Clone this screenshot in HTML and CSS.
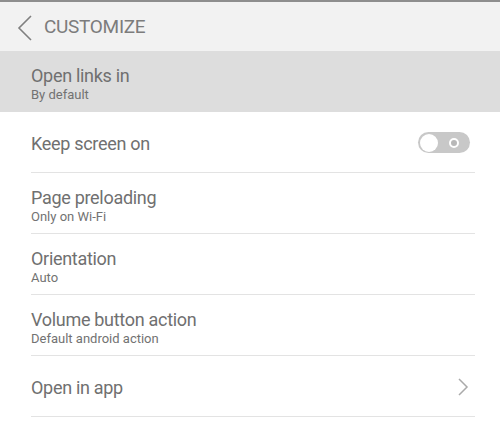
FILE: index.html
```html
<!DOCTYPE html>
<html>
<head>
<meta charset="utf-8">
<link rel="stylesheet" href="styles.css">
</head>
<body>
<div class="topline"></div>
<header class="header">
  <svg class="back" width="16" height="26" viewBox="0 0 16 26"><polyline points="14,1 2,13 14,25" fill="none" stroke="#808080" stroke-width="1.6"/></svg>
  <span class="header-title">CUSTOMIZE</span>
</header>
<div class="row active">
  <div class="row-inner two">
    <div class="title">Open links in</div>
    <div class="sub">By default</div>
  </div>
</div>
<div class="row">
  <div class="row-inner one with-ctrl">
    <div class="title">Keep screen on</div>
    <div class="toggle"><span class="knob"></span><span class="ring"></span></div>
  </div>
</div>
<div class="row">
  <div class="row-inner two">
    <div class="title">Page preloading</div>
    <div class="sub">Only on Wi-Fi</div>
  </div>
</div>
<div class="row">
  <div class="row-inner two">
    <div class="title">Orientation</div>
    <div class="sub">Auto</div>
  </div>
</div>
<div class="row">
  <div class="row-inner two">
    <div class="title">Volume button action</div>
    <div class="sub">Default android action</div>
  </div>
</div>
<div class="row">
  <div class="row-inner one with-ctrl">
    <div class="title">Open in app</div>
    <svg class="chev" width="12" height="18" viewBox="0 0 12 18"><polyline points="2,1 10,9 2,17" fill="none" stroke="#aaa" stroke-width="1.5"/></svg>
  </div>
</div>
</body>
</html>
```
FILE: styles.css
```css
html, body {
  margin: 0;
  padding: 0;
  background: #ffffff;
  font-family: Roboto, "Noto Sans", sans-serif;
  width: 500px;
  height: 429px;
  overflow: hidden;
}
.topline {
  height: 2px;
  background: #8e8e8e;
}
.header {
  height: 49px;
  background: #f2f2f2;
  display: flex;
  align-items: center;
  padding-left: 17px;
  box-sizing: border-box;
}
.back {
  display: block;
  margin-top: 2px;
}
.header-title {
  margin-left: 11px;
  font-size: 19px;
  color: #7c7c7c;
  letter-spacing: -0.3px;
  line-height: 22px;
  margin-top: 1px;
}
.row {
  height: 61px;
  box-sizing: border-box;
}
.row.active {
  background: #dddddd;
}
.row-inner {
  margin: 0 25px 0 31px;
  height: 61px;
  box-sizing: border-box;
  border-bottom: 1px solid #e3e3e3;
}
.row.active .row-inner {
  border-bottom: none;
}
.row-inner.two {
  padding-top: 14px;
}
.row-inner.one {
  padding-top: 21px;
}
.row-inner.with-ctrl {
  display: flex;
  justify-content: space-between;
  align-items: flex-start;
}
.title {
  font-size: 18px;
  line-height: 22px;
  color: #707070;
  letter-spacing: -0.3px;
}
.sub {
  font-size: 13px;
  line-height: 16px;
  color: #727272;
}
.toggle {
  position: relative;
  width: 52px;
  height: 21px;
  border-radius: 11px;
  background: #c8c8c8;
  margin-top: -1px;
  margin-right: 5px;
}
.knob {
  position: absolute;
  left: 2px;
  top: 1.5px;
  width: 18px;
  height: 18px;
  border-radius: 50%;
  background: #ffffff;
}
.ring {
  position: absolute;
  left: 31px;
  top: 5.5px;
  width: 6px;
  height: 6px;
  border-radius: 50%;
  border: 2px solid #ffffff;
  background: #b8b8b8;
}
.chev {
  display: block;
  margin-top: 1px;
  margin-right: 6px;
}
```
